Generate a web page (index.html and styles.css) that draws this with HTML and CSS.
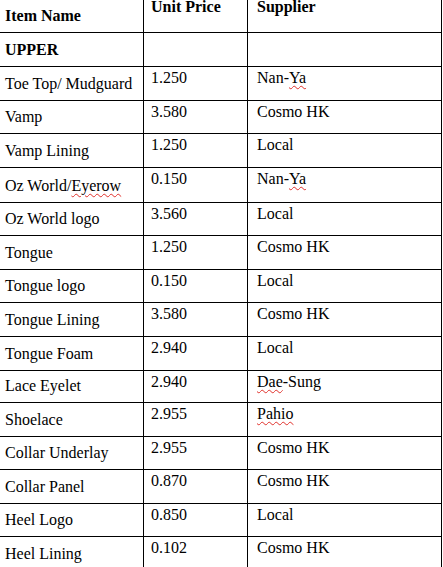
FILE: index.html
```html
<!DOCTYPE html>
<html lang="en">
<head>
<meta charset="utf-8">
<title>Parts list</title>
<link rel="stylesheet" href="styles.css">
</head>
<body>
<table class="parts">
  <colgroup>
    <col class="c-name">
    <col class="c-price">
    <col class="c-supp">
  </colgroup>
  <thead>
    <tr class="head">
      <th class="name">Item Name</th>
      <th class="val">Unit Price</th>
      <th class="val">Supplier</th>
    </tr>
  </thead>
  <tbody>
    <tr><td class="name bold">UPPER</td><td class="val"></td><td class="val"></td></tr>
    <tr><td class="name">Toe Top/ Mudguard</td><td class="val">1.250</td><td class="val">Nan-<span class="sp">Ya</span></td></tr>
    <tr class="short"><td class="name">Vamp</td><td class="val">3.580</td><td class="val">Cosmo HK</td></tr>
    <tr><td class="name">Vamp Lining</td><td class="val">1.250</td><td class="val">Local</td></tr>
    <tr class="tall"><td class="name">Oz World/<span class="sp">Eyerow</span></td><td class="val">0.150</td><td class="val">Nan-<span class="sp">Ya</span></td></tr>
    <tr class="short"><td class="name">Oz World logo</td><td class="val">3.560</td><td class="val">Local</td></tr>
    <tr><td class="name">Tongue</td><td class="val">1.250</td><td class="val">Cosmo HK</td></tr>
    <tr class="short"><td class="name">Tongue logo</td><td class="val">0.150</td><td class="val">Local</td></tr>
    <tr><td class="name">Tongue Lining</td><td class="val">3.580</td><td class="val">Cosmo HK</td></tr>
    <tr><td class="name">Tongue Foam</td><td class="val">2.940</td><td class="val">Local</td></tr>
    <tr class="shorter"><td class="name">Lace Eyelet</td><td class="val">2.940</td><td class="val"><span class="sp">Dae</span>-Sung</td></tr>
    <tr><td class="name">Shoelace</td><td class="val">2.955</td><td class="val"><span class="sp">Pahio</span></td></tr>
    <tr class="short"><td class="name">Collar Underlay</td><td class="val">2.955</td><td class="val">Cosmo HK</td></tr>
    <tr><td class="name">Collar Panel</td><td class="val">0.870</td><td class="val">Cosmo HK</td></tr>
    <tr class="short"><td class="name">Heel Logo</td><td class="val">0.850</td><td class="val">Local</td></tr>
    <tr><td class="name">Heel Lining</td><td class="val">0.102</td><td class="val">Cosmo HK</td></tr>
  </tbody>
</table>
</body>
</html>
```

FILE: styles.css
```css
html, body {
  margin: 0;
  padding: 0;
  background: #ffffff;
  overflow: hidden;
}

.parts {
  border-collapse: separate;
  border-spacing: 0;
  table-layout: fixed;
  width: 442px;
  margin-top: -4px;
  font-family: "Liberation Serif", "Times New Roman", serif;
  font-size: 16px;
  line-height: 18px;
  color: #000000;
}

.c-name { width: 144px; }
.c-price { width: 104px; }
.c-supp { width: 194px; }

.parts th,
.parts td {
  box-sizing: border-box;
  border-right: 1px solid #000000;
  border-bottom: 1px solid #000000;
  height: 34px;
  text-align: left;
  white-space: nowrap;
}

.parts .head th {
  height: 37px;
  font-weight: bold;
}

.parts .short td { height: 33px; }
.parts .shorter td { height: 32px; }
.parts .tall td { height: 35px; }

.name {
  vertical-align: bottom;
  padding: 0 0 7px 5px;
}

.bold {
  font-weight: bold;
}

.val {
  vertical-align: top;
  padding: 2px 0 0 7px;
}

.val:last-child {
  padding-left: 9px;
}

.sp {
  text-decoration: underline wavy #e0312b;
  text-decoration-thickness: 1px;
  text-underline-offset: 2px;
}
```
